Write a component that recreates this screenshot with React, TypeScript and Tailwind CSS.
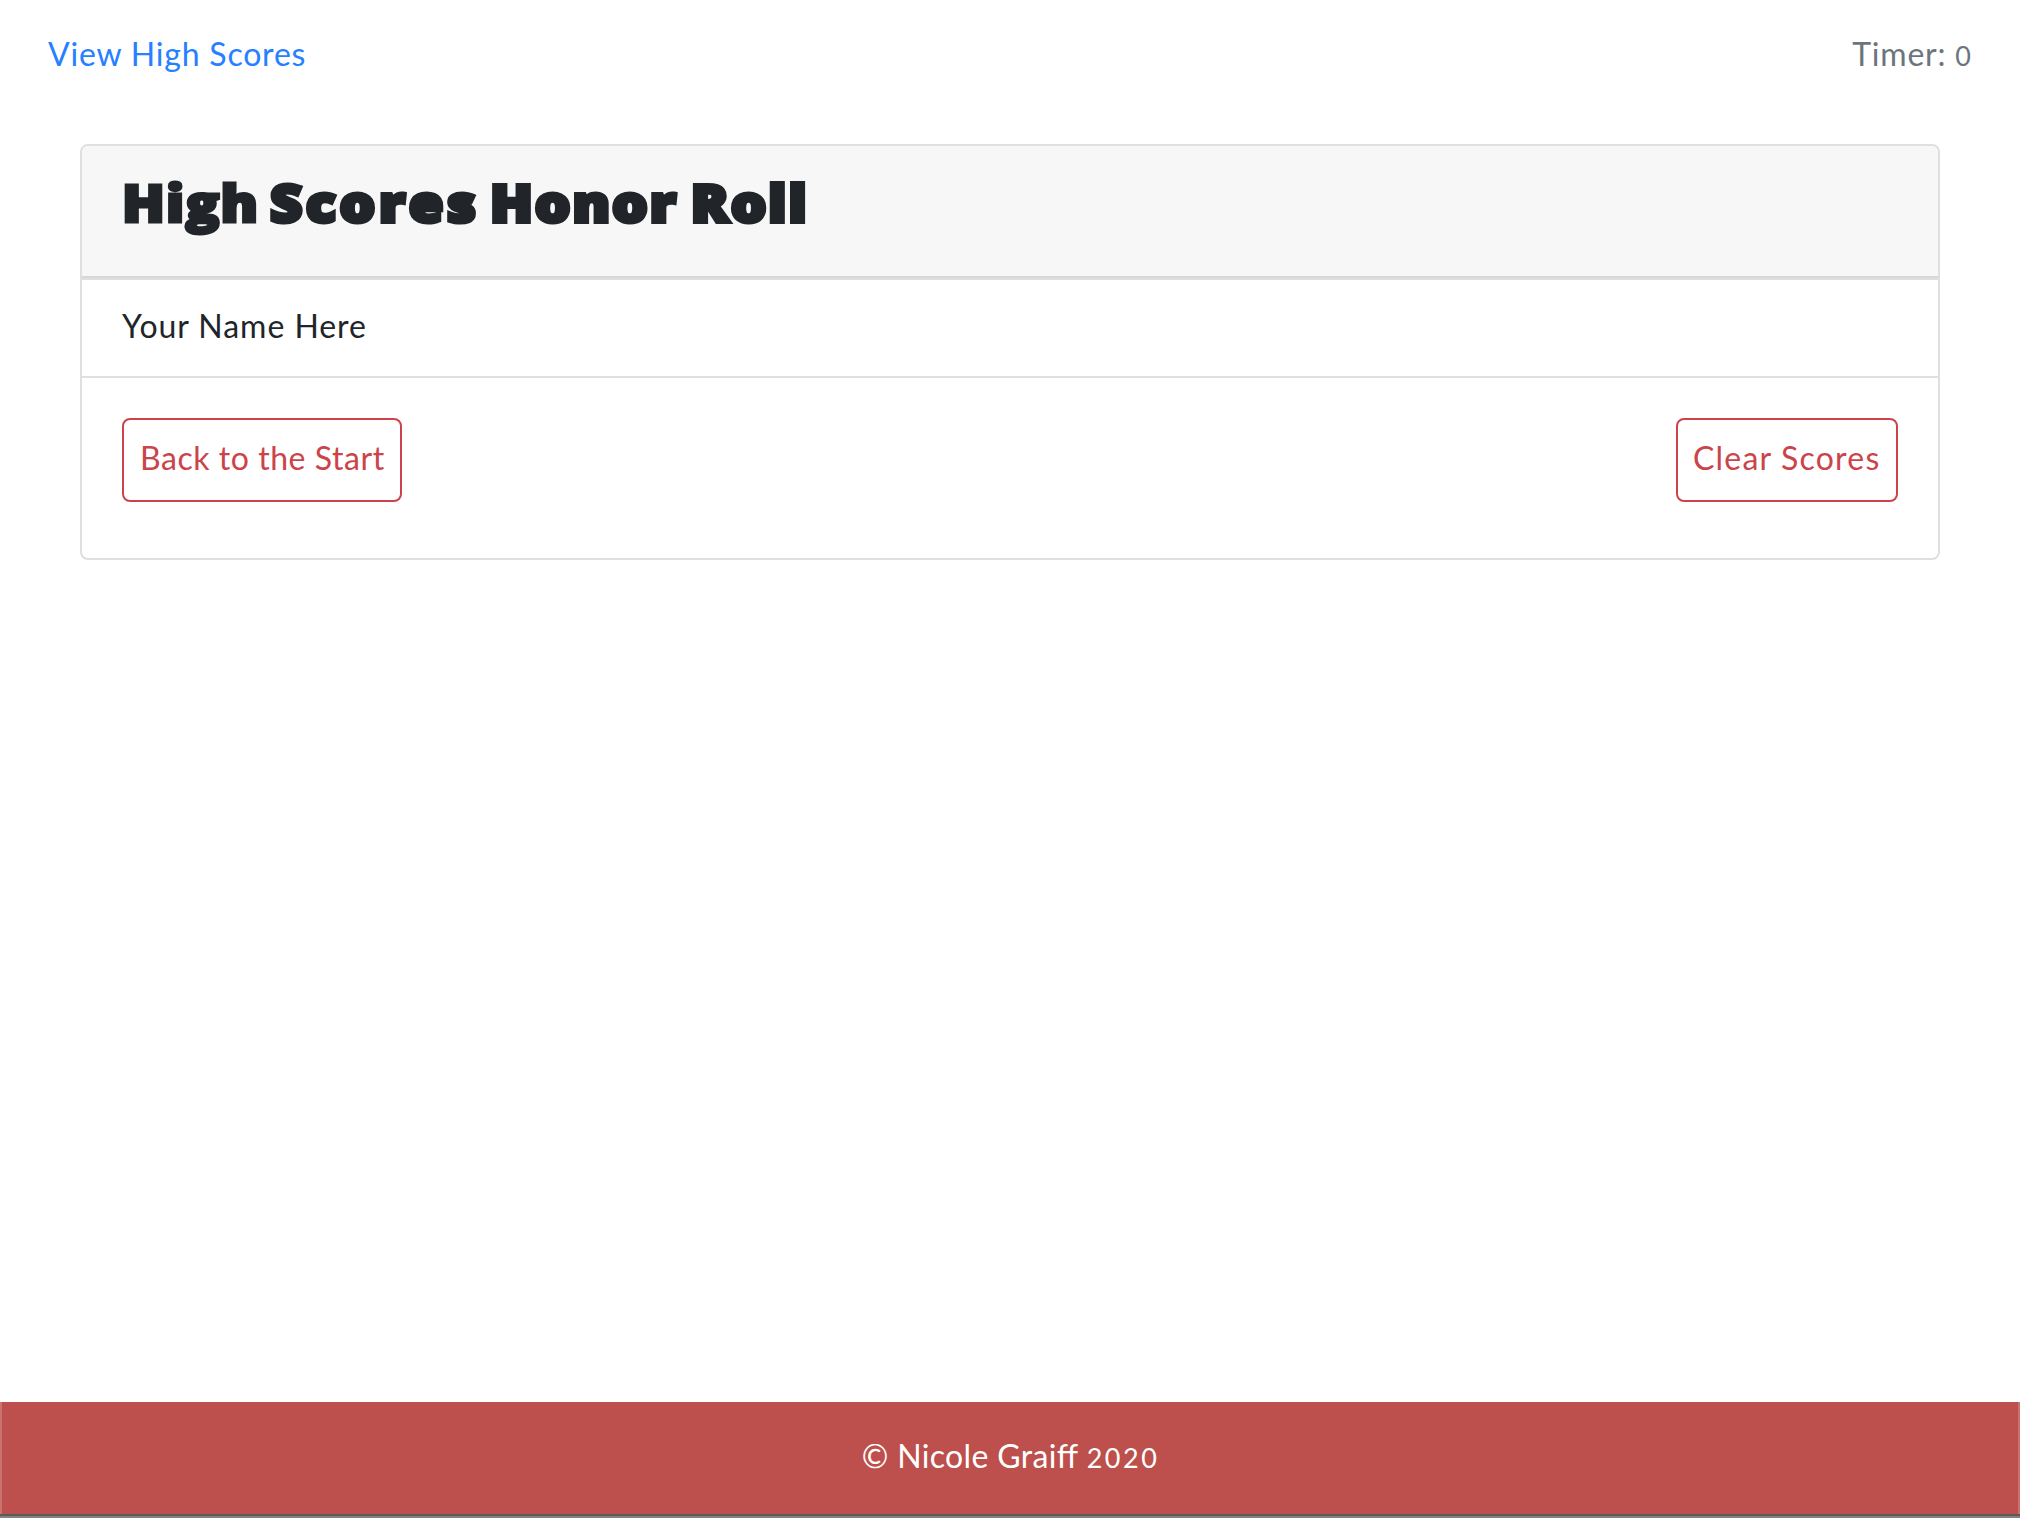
export default function App() {
  return (
    <div className="flex h-[1518px] w-full flex-col bg-white font-['Lato',sans-serif] text-[32px] leading-[48px] text-[#212529]">
      <nav className="flex h-36 shrink-0 items-start justify-between px-12 pt-[30px]">
        <a href="#scores" className="tracking-[0.8px] text-[#2680ff]">View High Scores</a>
        <span className="pr-px tracking-[0.8px] text-[#6c757d]">
          Timer: <span className="text-[27px] tracking-normal">0</span>
        </span>
      </nav>

      <main className="mx-20 flex h-[416px] shrink-0 flex-col overflow-hidden rounded-lg border-2 border-[#dfdfdf]">
        <header className="h-[132px] shrink-0 border-b-2 border-[#d7d7d7] bg-[#f7f7f7] pt-[26px] pl-10">
          <h1 className="flex origin-left scale-x-[1.1] font-['Open_Sans',sans-serif] text-[51px] leading-[60px] font-extrabold whitespace-nowrap [paint-order:stroke_fill] [stroke-linejoin:round] [-webkit-text-stroke:4px_#212529]">
            <span className="w-[134.5px] tracking-[1px] [-webkit-text-stroke-width:3px]">High</span>
            <span className="w-[200px] tracking-[3.2px]">Scores</span>
            <span className="w-[182.5px] tracking-[1.75px]">Honor</span>
            <span className="tracking-[1.8px]">Roll</span>
          </h1>
        </header>
        <div className="h-[100px] shrink-0 border-y-2 border-[#dfdfdf] pt-[22px] pl-10 tracking-[0.95px]">
          Your Name Here
        </div>
        <div className="flex justify-between px-10 pt-10">
          <button className="h-[84px] w-[280px] rounded-lg border-2 border-[#cb444a] pt-[14px] pb-[18px] pl-4 text-left tracking-[0.55px] whitespace-nowrap text-[#cb444a]">
            Back to the Start
          </button>
          <button className="h-[84px] w-[222px] rounded-lg border-2 border-[#cb444a] pt-[14px] pb-[18px] pl-[15px] text-left tracking-[1.2px] whitespace-nowrap text-[#cb444a]">
            Clear Scores
          </button>
        </div>
      </main>

      <footer className="mt-auto h-[116px] shrink-0 border-x-2 border-[#cb7170] bg-[#bd4f4c]">
        <div className="-mx-0.5 flex h-full flex-col justify-between">
          <p className="pt-[30px] pl-px text-center tracking-[0.35px] whitespace-pre text-white">
            © Nicole Grai<span className="tracking-normal">ff</span>{' '}
            <span className="text-[27px] tracking-[2.5px]">2020</span>
          </p>
          <div className="h-1 border-t-2 border-[#5b5b5b] bg-[#828282]" />
        </div>
      </footer>
    </div>
  );
}
